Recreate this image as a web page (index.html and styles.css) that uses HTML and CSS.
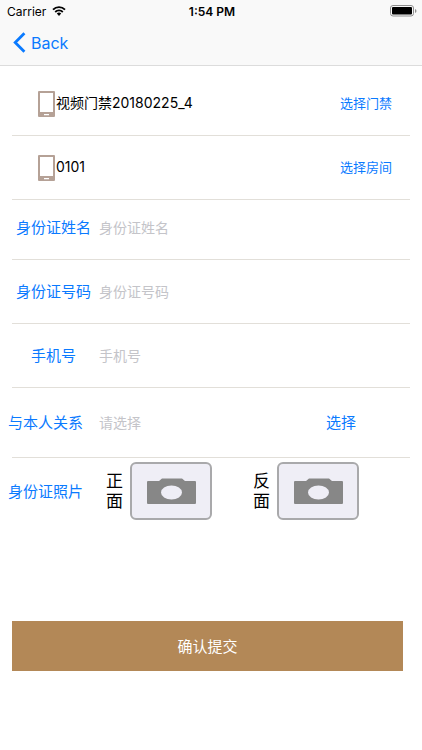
FILE: index.html
```html
<!DOCTYPE html>
<html lang="zh-CN">
<head>
  <meta charset="UTF-8" />
  <meta name="viewport" content="width=device-width, initial-scale=1.0" />
  <title>身份证</title>
  <link rel="stylesheet" href="styles.css">
</head>
<body>
  <header class="topo">
    <div class="status">
      <div class="carrier">
        <span>Carrier</span>
        <svg class="wifi" width="14" height="10" viewBox="0 0 14 10">
          <path d="M1 3.6a8.6 8.6 0 0 1 12 0" fill="none" stroke="#000" stroke-width="1.9" />
          <path d="M3.2 6a5.4 5.4 0 0 1 7.6 0" fill="none" stroke="#000" stroke-width="1.8" />
          <path d="M4.8 7.6a3.1 3.1 0 0 1 4.4 0L7 9.9z" fill="#000" />
        </svg>
      </div>
      <span class="clock">1:54 PM</span>
      <svg class="battery" width="27" height="12" viewBox="0 0 27 12">
        <rect x="0.5" y="0.5" width="23" height="10.5" rx="2.5" fill="none" stroke="#8f8f8f" />
        <rect x="2" y="2" width="20" height="7.5" rx="1" fill="#000" />
        <path d="M25 4v4q1.5-.6 1.5-2T25 4z" fill="#8f8f8f" />
      </svg>
    </div>
    <nav class="nav">
      <a class="back" href="#">
        <svg width="13" height="21" viewBox="0 0 13 21">
          <path d="M11.4 1.2L2.2 10.5l9.2 9.3" fill="none" stroke="#0a7aff" stroke-width="2.8" />
        </svg>
        <span>Back</span>
      </a>
    </nav>
  </header>

  <form class="form">
    <div class="row device first">
      <svg class="phone" width="17" height="26" viewBox="0 0 17 26">
        <path fill="#b5a196" fill-rule="evenodd" d="M1 0h15q1 0 1 1v24q0 1-1 1H1q-1 0-1-1V1q0-1 1-1zM2 2v19h13V2zM6 23v1.2h5V23z" />
      </svg>
      <span class="name">视频门禁20180225_4</span>
      <button type="button" class="pick">选择门禁</button>
    </div>
    <div class="row device">
      <svg class="phone" width="17" height="26" viewBox="0 0 17 26">
        <path fill="#b5a196" fill-rule="evenodd" d="M1 0h15q1 0 1 1v24q0 1-1 1H1q-1 0-1-1V1q0-1 1-1zM2 2v19h13V2zM6 23v1.2h5V23z" />
      </svg>
      <span class="name">0101</span>
      <button type="button" class="pick">选择房间</button>
    </div>
    <div class="row short">
      <label for="nome">身份证姓名</label>
      <input type="text" id="nome" placeholder="身份证姓名" />
    </div>
    <div class="row">
      <label for="numero">身份证号码</label>
      <input type="text" id="numero" placeholder="身份证号码" />
    </div>
    <div class="row">
      <label for="telefone">手机号</label>
      <input type="tel" id="telefone" placeholder="手机号" />
    </div>
    <div class="row relation">
      <label class="wide" for="relacao">与本人关系</label>
      <input type="text" id="relacao" placeholder="请选择" readonly />
      <button type="button" class="choose">选择</button>
    </div>

    <div class="photos">
      <span class="photos-title">身份证照片</span>
      <div class="photo">
        <span class="side">正面</span>
        <button type="button" class="camera" aria-label="正面">
          <svg width="49" height="26" viewBox="0 0 49 26">
            <path fill="#878787" d="M1 3h11l3-2.6h20L38 3h10q1 0 1 1v21q0 1-1 1H1q-1 0-1-1V4q0-1 1-1z" />
            <ellipse cx="24.5" cy="14.5" rx="10.5" ry="7" fill="#efeef6" />
          </svg>
        </button>
      </div>
      <div class="photo">
        <span class="side">反面</span>
        <button type="button" class="camera" aria-label="反面">
          <svg width="49" height="26" viewBox="0 0 49 26">
            <path fill="#878787" d="M1 3h11l3-2.6h20L38 3h10q1 0 1 1v21q0 1-1 1H1q-1 0-1-1V4q0-1 1-1z" />
            <ellipse cx="24.5" cy="14.5" rx="10.5" ry="7" fill="#efeef6" />
          </svg>
        </button>
      </div>
    </div>

    <button type="submit" class="submit">确认提交</button>
  </form>
</body>
</html>
```
FILE: styles.css
```css
* {
  box-sizing: border-box;
}

body {
  font-family: Inter, "Noto Sans CJK SC", sans-serif;
  margin: 0;
  background: #fff;
  color: #000;
}

button,
input {
  font-family: inherit;
  background: none;
  border: none;
  padding: 0;
}

button {
  cursor: pointer;
}

.topo {
  background: #f9f9f9;
  border-bottom: 1px solid #dcdcdc;
}

.status {
  display: grid;
  grid-template-columns: 1fr auto 1fr;
  align-items: center;
  height: 22px;
  padding: 0 5px 0 7px;
  font-size: 12px;
}

.carrier {
  display: flex;
  align-items: center;
  gap: 6px;
}

.clock {
  font-weight: 600;
}

.battery {
  justify-self: end;
}

.nav {
  display: flex;
  align-items: center;
  height: 43px;
  padding: 0 13px 2px;
}

.back {
  display: flex;
  align-items: center;
  gap: 5px;
  font-size: 16px;
  color: #0a7aff;
  text-decoration: none;
}

.row {
  display: flex;
  align-items: center;
  height: 64px;
  margin: 0 12px;
  border-bottom: 1px solid #e2dfd9;
}

.first {
  height: 70px;
  padding-top: 6px;
}

.short {
  height: 60px;
  padding-bottom: 4px;
}

.relation {
  height: 70px;
}

.device {
  padding-left: 26px;
  padding-right: 18px;
}

.name {
  flex: 1;
  padding: 0 0 3px 1px;
  font-size: 14px;
}

.pick {
  padding-bottom: 3px;
  font-size: 13px;
  color: #0a7aff;
}

label {
  width: 83px;
  margin-right: 4px;
  padding-bottom: 2px;
  font-size: 15px;
  text-align: center;
  color: #0a7aff;
}

.wide {
  width: 87px;
  margin-left: -4px;
  text-align: left;
}

.row input {
  flex: 1;
  min-width: 0;
  font-size: 14px;
  outline: none;
}

.row input::placeholder {
  color: #c4c4c9;
}

.choose {
  margin-right: 54px;
  padding-bottom: 2px;
  font-size: 15px;
  color: #0a7aff;
}

.photos {
  display: flex;
  align-items: center;
  padding: 4px 8px 0;
}

.photos-title {
  width: 98px;
  padding-bottom: 2px;
  font-size: 15px;
  color: #0a7aff;
}

.photo {
  display: flex;
  align-items: center;
  gap: 7px;
  margin-right: 41px;
}

.photo:last-child {
  margin-right: 0;
}

.side {
  width: 17px;
  font-size: 17px;
  line-height: 20px;
}

.camera {
  display: flex;
  align-items: center;
  justify-content: center;
  width: 82px;
  height: 58px;
  background: #efeef6;
  border: 2px solid #a9a9ab;
  border-radius: 6px;
}

.submit {
  display: block;
  width: calc(100% - 31px);
  height: 50px;
  margin: 101px 19px 0 12px;
  padding-bottom: 2px;
  background: #b38857;
  font-size: 15px;
  color: #fff;
}
```
